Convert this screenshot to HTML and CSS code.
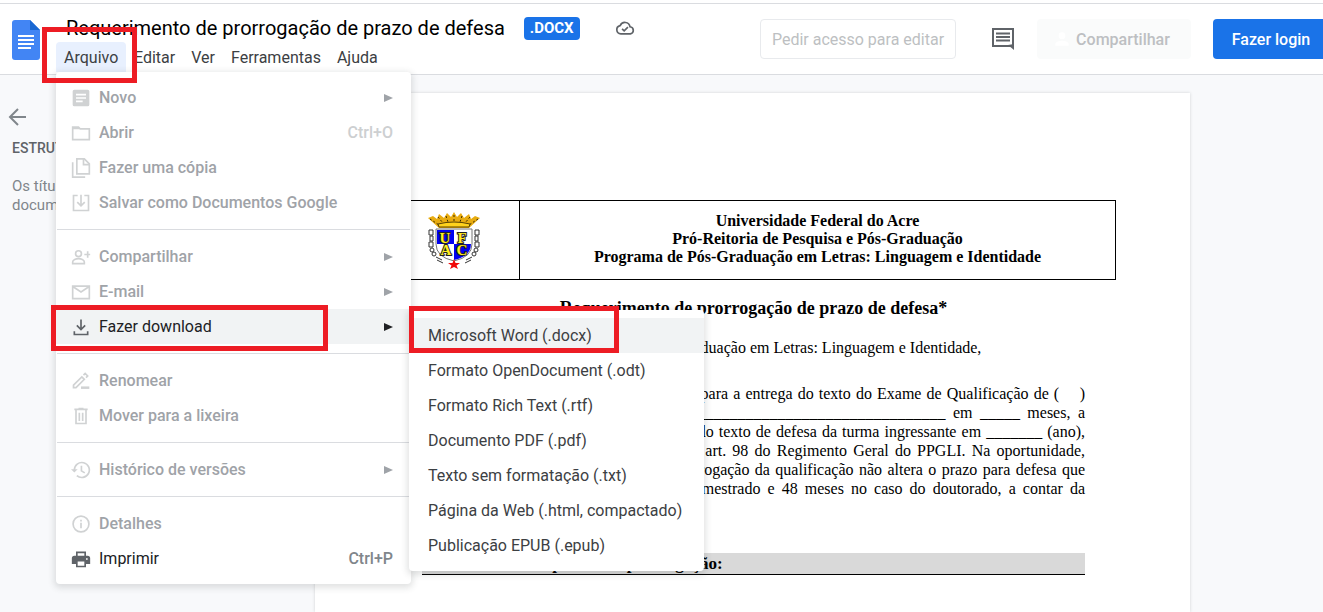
FILE: index.html
```html
<!DOCTYPE html>
<html lang="pt-BR">
<head>
	<meta charset="UTF-8">
	<meta name="viewport" content="width=device-width, initial-scale=1.0">
	<title>Requerimento de prorrogação de prazo de defesa</title>
	<link rel="stylesheet" href="styles.css">
</head>
<body>
	<header class="header">
		<svg class="logo" viewBox="0 0 28 40">
			<path d="M3 0h15l10 10v27a3 3 0 0 1-3 3H3a3 3 0 0 1-3-3V3a3 3 0 0 1 3-3z" fill="#4285f4"/>
			<path d="M18 0l10 10H18z" fill="#1967d2"/>
			<path d="M6 16h16M6 20h16M6 24h16M6 28h13" stroke="#fff" stroke-width="2"/>
		</svg>
		<div class="heading">
			<div class="title-row">
				<h1 class="doc-title">Requerimento de prorrogação de prazo de defesa</h1>
				<span class="badge">.DOCX</span>
				<svg class="cloud" viewBox="0 0 24 24" fill="none" stroke="#5f6368" stroke-width="2">
					<path d="M7 19a5 5 0 0 1-.8-9.900A6.200 6.200 0 0 1 18 10.500 4.300 4.300 0 0 1 18.500 19z"/>
					<path d="M8.500 13l2.500 2.500 4.500-4.500"/>
				</svg>
			</div>
			<nav class="menubar">
				<div class="menu-root">
					<button class="menubar-item open">Arquivo</button>
					<div class="menu file-menu">
						<button class="item" disabled>
							<svg class="icon" viewBox="0 0 24 24"><path fill="currentColor" fill-rule="evenodd" d="M4 2h16a2 2 0 0 1 2 2v16a2 2 0 0 1-2 2H4a2 2 0 0 1-2-2V4a2 2 0 0 1 2-2zM6 7v2h12V7zm0 4v2h12v-2zm0 4v2h8v-2z"/></svg>
							<span>Novo</span><span class="arrow"></span>
						</button>
						<button class="item" disabled>
							<svg class="icon" viewBox="0 0 24 24" fill="none" stroke="currentColor" stroke-width="2"><path d="M2 5h7l2 2h11v13H2z"/><path d="M2 6.500h8"/></svg>
							<span>Abrir</span><kbd>Ctrl+O</kbd>
						</button>
						<button class="item" disabled>
							<svg class="icon" viewBox="0 0 24 24" fill="none" stroke="currentColor" stroke-width="2"><path d="M7 1h9l6 6v12H7z"/><path d="M15 1v7h7M2 5v18h15"/></svg>
							<span>Fazer uma cópia</span>
						</button>
						<button class="item" disabled>
							<svg class="icon" viewBox="0 0 24 24" fill="none" stroke="currentColor" stroke-width="2"><path d="M8 3H3v18h18V3h-5M12 2v13M7.500 11l4.500 4.500 4.500-4.500"/></svg>
							<span>Salvar como Documentos Google</span>
						</button>
						<hr>
						<button class="item" disabled>
							<svg class="icon" viewBox="0 0 24 24" fill="none" stroke="currentColor" stroke-width="2"><circle cx="9" cy="8" r="3.500"/><path d="M2 20v-2c0-2.500 4-4 7-4s7 1.500 7 4v2zM20 5v8M16 9h7"/></svg>
							<span>Compartilhar</span><span class="arrow"></span>
						</button>
						<button class="item" disabled>
							<svg class="icon" viewBox="0 0 24 24" fill="none" stroke="currentColor" stroke-width="2"><path d="M2 5h20v15H2zM3 6l9 6 9-6"/></svg>
							<span>E-mail</span><span class="arrow"></span>
						</button>
						<div class="submenu-root">
							<button class="item active">
								<svg class="icon" viewBox="0 0 24 24" fill="none" stroke="currentColor" stroke-width="2"><path d="M12 3v12M7 10l5 5 5-5M4 17v4h16v-4"/></svg>
								<span>Fazer download</span><span class="arrow"></span>
							</button>
							<div class="mark mark-download"></div>
							<div class="menu submenu">
								<div class="submenu-first">
									<button class="item active">Microsoft Word (.docx)</button>
									<div class="mark mark-word"></div>
								</div>
								<button class="item">Formato OpenDocument (.odt)</button>
								<button class="item">Formato Rich Text (.rtf)</button>
								<button class="item">Documento PDF (.pdf)</button>
								<button class="item">Texto sem formatação (.txt)</button>
								<button class="item">Página da Web (.html, compactado)</button>
								<button class="item">Publicação EPUB (.epub)</button>
							</div>
						</div>
						<hr>
						<button class="item" disabled>
							<svg class="icon" viewBox="0 0 24 24" fill="none" stroke="currentColor" stroke-width="2"><path d="M3 20v-3L13 7l3 3L6 20zM15 5l2-2 3 3-2 2"/><path d="M12 20h10" stroke-width="3"/></svg>
							<span>Renomear</span>
						</button>
						<button class="item" disabled>
							<svg class="icon" viewBox="0 0 24 24" fill="none" stroke="currentColor" stroke-width="2"><path d="M4 4h16M9 3h6M6 4v17h12V4M10 8v10M14 8v10"/></svg>
							<span>Mover para a lixeira</span>
						</button>
						<hr>
						<button class="item" disabled>
							<svg class="icon" viewBox="0 0 24 24" fill="none" stroke="currentColor" stroke-width="2"><path d="M4 12a9 9 0 1 1 3 6.700M12.500 7v6l4 2.500"/><path d="M0 11h8l-4 4z" fill="currentColor" stroke="none"/></svg>
							<span>Histórico de versões</span><span class="arrow"></span>
						</button>
						<hr>
						<button class="item" disabled>
							<svg class="icon" viewBox="0 0 24 24" fill="none" stroke="currentColor" stroke-width="2"><circle cx="12" cy="12" r="9.500"/><path d="M12 10.500v6.500M12 7v2"/></svg>
							<span>Detalhes</span>
						</button>
						<button class="item">
							<svg class="icon" viewBox="0 0 24 24"><path fill="currentColor" fill-rule="evenodd" d="M6 3h12v5h2a3 3 0 0 1 3 3v7h-5v4H6v-4H1v-7a3 3 0 0 1 3-3h2zm2 2v3h8V5zm0 10v5h8v-5zm10-4v2h2v-2z"/></svg>
							<span>Imprimir</span><kbd>Ctrl+P</kbd>
						</button>
					</div>
					<div class="mark mark-file"></div>
				</div>
				<button class="menubar-item">Editar</button>
				<button class="menubar-item">Ver</button>
				<button class="menubar-item">Ferramentas</button>
				<button class="menubar-item">Ajuda</button>
			</nav>
		</div>
		<div class="actions">
			<button class="btn btn-outline">Pedir acesso para editar</button>
			<button class="btn-icon" aria-label="Comentários">
				<svg viewBox="0 0 24 24" fill="none" stroke="#5f6368" stroke-width="2"><path d="M2 2h20v17H2z"/><path d="M23 17v6l-6-5z" fill="#5f6368" stroke="none"/><path d="M5 6.500h14M5 10h14M5 13.500h14"/></svg>
			</button>
			<button class="btn btn-share" disabled>
				<svg viewBox="0 0 24 24" fill="#fff"><circle cx="12" cy="8" r="4"/><path d="M4 20v-2c0-3 5-4 8-4s8 1 8 4v2z"/></svg>
				Compartilhar
			</button>
			<button class="btn btn-login">Fazer login</button>
		</div>
	</header>

	<main class="workspace">
		<aside class="outline">
			<button class="btn-back" aria-label="Fechar">
				<svg viewBox="0 0 20 20" fill="none" stroke="#80868b" stroke-width="2"><path d="M18 10H2M10 2l-8 8 8 8"/></svg>
			</button>
			<h2>ESTRUTURA</h2>
			<p>Os títulos que você adicionar ao documento aparecerão aqui.</p>
		</aside>
		<article class="page">
			<table class="letterhead">
				<tr>
					<td class="crest-cell">
						<svg class="crest" viewBox="0 0 52 57">
							<path d="M0 6l5-2 4 3 2-5 5 4 3-5 4 4 3-5 3 5 4-4 3 5 5-4 2 5 4-3 5 2-11 10H11z" fill="#e8ac10"/>
							<path d="M2 7l9 6M10 5l5 6M18 4l2 6M26 3v6M34 4l-2 6M42 5l-5 6M50 7l-9 6" stroke="#3a2a00" stroke-dasharray="2 2"/>
							<path d="M10 12q16-4 32 0l-1 3H11z" fill="#ffd21c" stroke="#5a4300"/>
							<path d="M8 17h36v15q0 13-18 17Q8 45 8 32z" fill="#fff" stroke="#777"/>
							<path d="M9 18h17v14H9zM26 32h17q0 12-17 16z" fill="#0000f0"/>
							<g fill="none" stroke="#333">
								<path d="M1 18h4v5H1zM2 24h3v5H2zM1 30h4v5H1zM47 18h4v5h-4zM47 24h3v5h-3zM47 30h4v5h-4z"/>
								<circle cx="4" cy="38" r="2"/><circle cx="6" cy="42" r="2"/><circle cx="48" cy="38" r="2"/><circle cx="46" cy="42" r="2"/>
								<path d="M8 45l6 3M9 48l6 3M44 45l-6 3M43 48l-6 3"/>
							</g>
							<path d="M26 47l1.500 4H32l-3.500 2.500L30 57l-4-2-4 2 1.500-3.500L20 51h4.500z" fill="#f00808"/>
							<g class="crest-letters">
								<text x="17" y="31">U</text>
								<text x="34" y="31">F</text>
								<text x="18" y="43">A</text>
								<text x="34" y="43">C</text>
							</g>
						</svg>
					</td>
					<td class="institution">
						<div>Universidade Federal do Acre</div>
						<div>Pró-Reitoria de Pesquisa e Pós-Graduação</div>
						<div>Programa de Pós-Graduação em Letras: Linguagem e Identidade</div>
					</td>
				</tr>
			</table>
			<h2 class="page-title">Requerimento de prorrogação de prazo de defesa*</h2>
			<p class="greeting">À Coordenação deste Programa de Pós-Graduação em Letras: Linguagem e Identidade,</p>
			<div class="body-text">
				<p>Venho solicitar uma prorrogação de prazo para a entrega do texto do Exame de Qualificação de (&nbsp;&nbsp;&nbsp;&nbsp;)</p>
				<p>mestrado (&nbsp;&nbsp;) doutorado ____________________________________________ em _____ meses, a</p>
				<p>contar do prazo estabelecido para entrega do texto de defesa da turma ingressante em _______ (ano),</p>
				<p>conforme estabelecido no inciso único do art. 98 do Regimento Geral do PPGLI. Na oportunidade,</p>
				<p>declaro também estar ciente de que a prorrogação da qualificação não altera o prazo para defesa que</p>
				<p>continua sendo de 24 meses no caso do mestrado e 48 meses no caso do doutorado, a contar da</p>
			</div>
			<h3 class="section">Justificativa do pedido de prorrogação:</h3>
		</article>
	</main>
</body>
</html>
```
FILE: styles.css
```css
* {
	box-sizing: border-box;
}
body {
	margin: 0;
	height: 100vh;
	overflow: hidden;
	display: flex;
	flex-direction: column;
	background: #f8f9fb;
	font-family: Roboto, "Liberation Sans", sans-serif;
	font-size: 16px;
	color: #202124;
}
h1, h2, h3, p {
	margin: 0;
}
button {
	border: 0;
	background: none;
	font: inherit;
	color: inherit;
	padding: 0;
	white-space: nowrap;
}

/* header */
.header {
	display: flex;
	margin-top: 3px;
	border-top: 1px solid #dadce0;
	border-bottom: 1px solid #dadce0;
	height: 72px;
	padding-left: 12px;
	background: #fff;
	box-shadow: 0 -3px #fff;
	position: relative;
	z-index: 2;
}
.logo {
	width: 28px;
	height: 40px;
	margin-top: 16px;
	flex: none;
}
.heading {
	margin-left: 16px;
	padding-top: 10px;
}
.title-row {
	display: flex;
	align-items: center;
	height: 28px;
	padding-left: 10px;
}
.doc-title {
	font-size: 20px;
	font-weight: 400;
	color: #000;
	white-space: nowrap;
}
.badge {
	margin-left: 19px;
	padding: 0 6px;
	border-radius: 4px;
	background: #1a73e8;
	color: #fff;
	font-size: 15px;
	font-weight: 700;
	line-height: 23px;
}
.cloud {
	width: 20px;
	height: 20px;
	margin-left: 35px;
}
.menubar {
	display: flex;
}
.menubar-item {
	height: 30px;
	padding: 1px 8px 0;
	color: #3c4043;
}
.menubar-item.open {
	width: 70px;
	border-radius: 4px 4px 0 0;
	background: #e8f0fe;
}
.menu-root, .submenu-root, .submenu-first {
	position: relative;
}
.actions {
	display: flex;
	margin-left: auto;
	padding-top: 15px;
}
.btn {
	height: 40px;
	border-radius: 4px;
}
.btn-outline {
	width: 196px;
	border: 1px solid #e8eaed;
	color: #bdbfc2;
}
.btn-icon {
	width: 24px;
	height: 40px;
	margin: 0 22px 0 35px;
}
.btn-icon svg {
	display: block;
	width: 24px;
}
.btn-share {
	display: flex;
	align-items: center;
	justify-content: center;
	gap: 4px;
	width: 154px;
	padding-right: 6px;
	background: #fafbfb;
	color: #bdbfc2;
	font-weight: 500;
}
.btn-share svg {
	width: 20px;
}
.btn-login {
	width: 110px;
	margin-left: 22px;
	padding-left: 6px;
	border-radius: 4px 0 0 4px;
	background: #1a73e8;
	color: #fff;
	font-weight: 500;
}

/* menus */
.menu {
	position: absolute;
	padding: 8px 0;
	border-radius: 4px;
	background: #fff;
	box-shadow: 0 2px 6px 2px rgba(60, 64, 67, 0.15);
}
.file-menu {
	top: 30px;
	left: 0;
	width: 355px;
}
.submenu {
	top: 1px;
	left: 353px;
	width: 295px;
}
.item {
	display: flex;
	align-items: center;
	width: 100%;
	height: 35px;
	padding: 0 18px 0 15px;
}
.item:disabled {
	color: #9fa3a8;
	font-weight: 500;
}
.item.active {
	background: #f1f3f4;
}
.submenu .item {
	padding-left: 19px;
	color: #3c4043;
}
.icon {
	width: 20px;
	height: 20px;
	margin-right: 8px;
	color: #5f6368;
}
.item:disabled .icon {
	color: #d0d2d3;
}
.arrow {
	margin-left: auto;
	border: 4px solid transparent;
	border-left: 9px solid currentColor;
	border-right: 0;
}
.item kbd {
	margin-left: auto;
	font: inherit;
	font-weight: 500;
	color: #80868b;
}
.item:disabled kbd {
	color: #cdcfd1;
}
.menu hr {
	height: 1px;
	margin: 9px 1px;
	border: 0;
	background: #dadce0;
}

/* red frames round the steps */
.mark {
	position: absolute;
	border: 5px solid #ed1c24;
	pointer-events: none;
}
.mark-file {
	inset: -15px -11px -11px -14px;
}
.mark-download {
	inset: -4px 83px -7px -5px;
}
.mark-word {
	inset: -12px 85px 0 0;
}

/* workspace */
.workspace {
	display: flex;
	flex: 1;
	overflow: hidden;
}
.outline {
	flex: none;
	width: 315px;
	padding: 32px 12px;
}
.btn-back {
	display: block;
	margin-left: -4px;
}
.btn-back svg {
	display: block;
	width: 20px;
	height: 20px;
}
.outline h2 {
	margin-top: 11px;
	font-size: 14px;
	font-weight: 500;
	line-height: 20px;
	color: #5f6368;
}
.outline p {
	width: 230px;
	margin-top: 19px;
	font-size: 15px;
	line-height: 19px;
	color: #80868b;
}
.page {
	flex: 1;
	margin: 18px 133px 0 0;
	padding: 107px 105px 0 107px;
	background: #fff;
	box-shadow: 0 0 3px rgba(60, 64, 67, 0.2);
	font-family: "Liberation Serif", serif;
	font-size: 16px;
	color: #000;
}
.letterhead {
	width: calc(100% + 65px);
	height: 80px;
	margin: 0 -31px 0 -34px;
	border-collapse: collapse;
	table-layout: fixed;
	font-weight: 700;
	line-height: 18px;
	text-align: center;
}
.letterhead td {
	padding: 0;
	border: 1px solid #000;
}
.letterhead .crest-cell {
	width: 131px;
}
.letterhead .institution {
	padding-bottom: 2px;
}
.crest {
	display: block;
	width: 52px;
	height: 57px;
	margin: 0 auto;
}
.crest-letters {
	font: 700 15px "Liberation Serif", serif;
	text-anchor: middle;
	fill: #ffee20;
	stroke: #222;
	stroke-width: 2px;
	paint-order: stroke;
}
.page-title {
	margin-top: 18px;
	font-size: 18px;
	line-height: 20px;
	text-align: center;
}
.greeting {
	margin-top: 20px;
	line-height: 20px;
	white-space: nowrap;
}
.body-text {
	margin-top: 26px;
	line-height: 19px;
	text-align: justify;
	text-align-last: justify;
}
.section {
	margin-top: 55px;
	padding-left: 15px;
	border-bottom: 1px solid #000;
	background: #d9d9d9;
	font-size: 17px;
	line-height: 21px;
}
```
